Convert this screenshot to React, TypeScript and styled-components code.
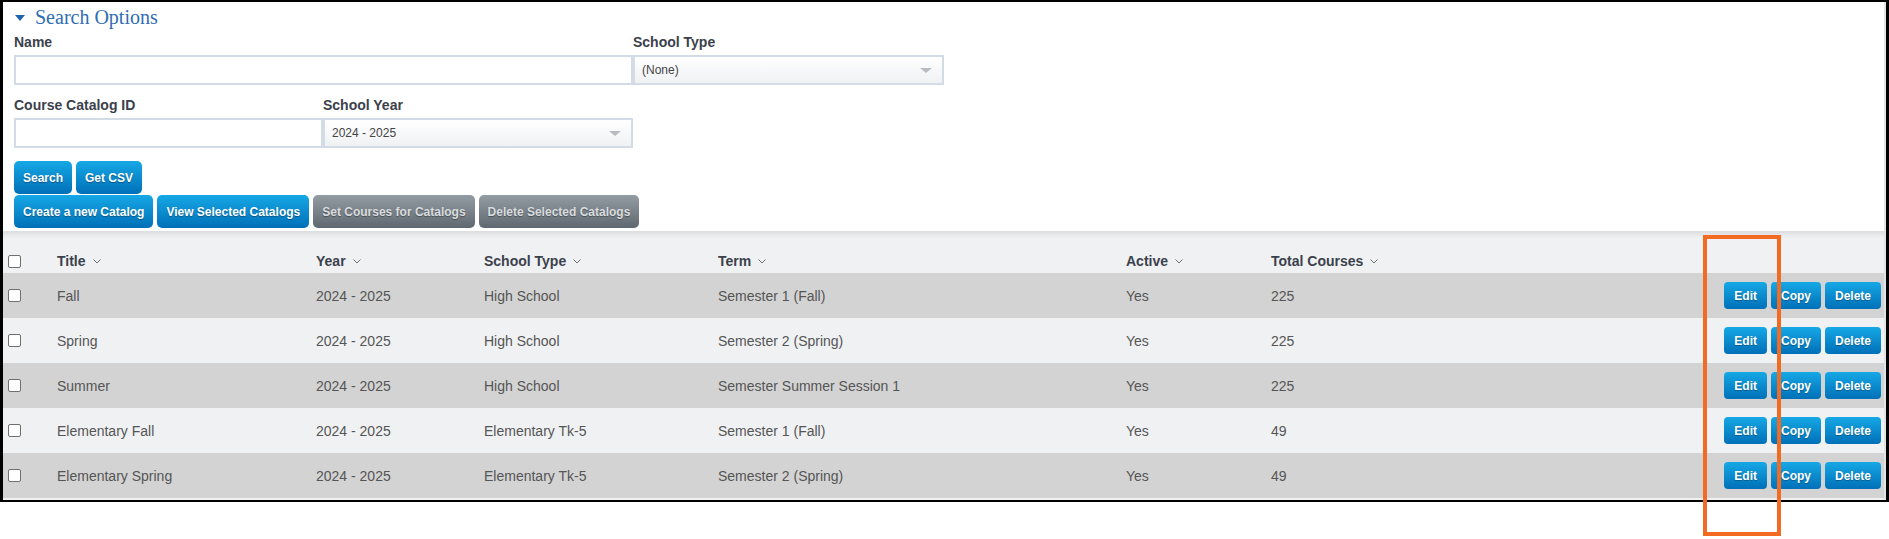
import React from "react";
import styled, { createGlobalStyle } from "styled-components";

interface Catalog {
	title: string;
	year: string;
	schoolType: string;
	term: string;
	active: string;
	total: number;
}

const catalogs: Catalog[] = [
	{ title: "Fall", year: "2024 - 2025", schoolType: "High School", term: "Semester 1 (Fall)", active: "Yes", total: 225 },
	{ title: "Spring", year: "2024 - 2025", schoolType: "High School", term: "Semester 2 (Spring)", active: "Yes", total: 225 },
	{ title: "Summer", year: "2024 - 2025", schoolType: "High School", term: "Semester Summer Session 1", active: "Yes", total: 225 },
	{ title: "Elementary Fall", year: "2024 - 2025", schoolType: "Elementary Tk-5", term: "Semester 1 (Fall)", active: "Yes", total: 49 },
	{ title: "Elementary Spring", year: "2024 - 2025", schoolType: "Elementary Tk-5", term: "Semester 2 (Spring)", active: "Yes", total: 49 },
];

const headers = ["Title", "Year", "School Type", "Term", "Active", "Total Courses"];

const Chevron = () => (
	<svg width="8" height="5" viewBox="0 0 8 5">
		<path d="M0.5 0.5 L4 4 L7.5 0.5" fill="none" stroke="#6b6f75" strokeWidth="1" />
	</svg>
);

const App: React.FC = () => {
	return (
		<Page>
			<GlobalStyle />
			<Frame>
				<Form>
					<Heading>
						<Caret />
						Search Options
					</Heading>
					<Fields>
						<Field span={2}>
							<Label>Name</Label>
							<TextBox />
						</Field>
						<Field span={1}>
							<Label>School Type</Label>
							<Select>
								(None)
								<Arrow />
							</Select>
						</Field>
						<Field span={1}>
							<Label>Course Catalog ID</Label>
							<TextBox />
						</Field>
						<Field span={1}>
							<Label>School Year</Label>
							<Select>
								2024 - 2025
								<Arrow />
							</Select>
						</Field>
					</Fields>
					<ButtonRow first>
						<Button>Search</Button>
						<Button>Get CSV</Button>
					</ButtonRow>
					<ButtonRow>
						<Button>Create a new Catalog</Button>
						<Button>View Selected Catalogs</Button>
						<Button disabled>Set Courses for Catalogs</Button>
						<Button disabled>Delete Selected Catalogs</Button>
					</ButtonRow>
				</Form>
				<Table>
					<HeaderRow>
						<CheckCell>
							<Check />
						</CheckCell>
						{headers.map((h) => (
							<HeadCell key={h}>
								{h}
								<Chevron />
							</HeadCell>
						))}
						<span />
					</HeaderRow>
					{catalogs.map((c, i) => (
						<Row key={c.title} odd={i % 2 === 0}>
							<CheckCell>
								<Check />
							</CheckCell>
							<Cell>{c.title}</Cell>
							<Cell>{c.year}</Cell>
							<Cell>{c.schoolType}</Cell>
							<Cell>{c.term}</Cell>
							<Cell>{c.active}</Cell>
							<Cell>{c.total}</Cell>
							<Actions>
								<SmallButton>Edit</SmallButton>
								<SmallButton>Copy</SmallButton>
								<SmallButton>Delete</SmallButton>
							</Actions>
						</Row>
					))}
				</Table>
			</Frame>
			<Highlight />
		</Page>
	);
};

export default App;

const GlobalStyle = createGlobalStyle`
	body {
		margin: 0;
		background: #fff;
		font-family: "Liberation Sans", Arial, sans-serif;
	}
`;

const Page = styled.div`
	position: relative;
	width: 1889px;
	height: 539px;
	box-sizing: border-box;
`;

const Frame = styled.div`
	width: 1889px;
	box-sizing: border-box;
	border-style: solid;
	border-color: #000;
	border-width: 2px 3px 2px 3px;
	background: #fff;
	display: flex;
	flex-direction: column;
	box-shadow: inset -2px 0 0 #e2e3e5;
`;

const Form = styled.div`
	padding: 3px 11px 3px 11px;
	display: flex;
	flex-direction: column;
`;

const Heading = styled.div`
	display: flex;
	align-items: center;
	height: 24px;
	font-family: "Liberation Serif", "Times New Roman", serif;
	font-size: 20px;
	color: #2f6db3;
`;

const Caret = styled.span`
	width: 0;
	height: 0;
	margin: 1px 10px 0 1px;
	border-left: 5px solid transparent;
	border-right: 5px solid transparent;
	border-top: 6px solid #1f62ad;
`;

const Fields = styled.div`
	display: grid;
	grid-template-columns: 309px 310px 311px;
	row-gap: 12px;
	margin-top: 5px;
`;

const Field = styled.div<{ span: number }>`
	grid-column: span ${(p) => p.span};
	display: flex;
	flex-direction: column;
`;

const Label = styled.div`
	font-size: 14px;
	line-height: 16px;
	font-weight: bold;
	color: #3b414c;
	margin-bottom: 5px;
`;

const TextBox = styled.div`
	height: 30px;
	box-sizing: border-box;
	border: 2px solid #d3dce6;
	background: #fff;
`;

const Select = styled.div`
	height: 30px;
	box-sizing: border-box;
	border: 2px solid #d3dce6;
	background: linear-gradient(#ffffff, #eff1f3);
	display: flex;
	align-items: center;
	justify-content: space-between;
	padding: 0 10px 0 7px;
	font-size: 12px;
	color: #444;
`;

const Arrow = styled.span`
	width: 0;
	height: 0;
	border-left: 6px solid transparent;
	border-right: 6px solid transparent;
	border-top: 5px solid #b8bcc1;
`;

const ButtonRow = styled.div<{ first?: boolean }>`
	display: flex;
	gap: 4px;
	margin-top: ${(p) => (p.first ? "13px" : "1px")};
`;

const Button = styled.div<{ disabled?: boolean }>`
	height: 33px;
	padding: 0 9px;
	box-sizing: border-box;
	display: flex;
	align-items: center;
	border-radius: 5px;
	font-size: 12px;
	font-weight: bold;
	color: ${(p) => (p.disabled ? "#d9dcdf" : "#fff")};
	text-shadow: 0 1px 1px rgba(0, 0, 0, 0.35);
	background: ${(p) =>
		p.disabled
			? "linear-gradient(#949ca3, #5f6870)"
			: "linear-gradient(#16a8e6, #0070b8)"};
`;

const Table = styled.div`
	background: #f0f1f3;
	box-shadow: inset 0 7px 6px -5px rgba(0, 0, 0, 0.12);
	padding-bottom: 2px;
	margin-right: 2px;
`;

const gridColumns = "54px 259px 168px 234px 408px 145px 1fr auto";

const HeaderRow = styled.div`
	display: grid;
	grid-template-columns: ${gridColumns};
	height: 42px;
	align-items: end;
	padding-bottom: 4px;
	box-sizing: border-box;
`;

const Row = styled.div<{ odd: boolean }>`
	display: grid;
	grid-template-columns: ${gridColumns};
	height: 45px;
	align-items: center;
	background: ${(p) => (p.odd ? "#d3d3d3" : "#f0f1f3")};
`;

const CheckCell = styled.div`
	padding-left: 5px;
	height: 16px;
	display: flex;
	align-items: center;
`;

const Check = styled.span`
	width: 13px;
	height: 13px;
	box-sizing: border-box;
	border: 1px solid #6f6f6f;
	border-radius: 2px;
	background: #fff;
`;

const HeadCell = styled.div`
	display: flex;
	align-items: center;
	gap: 7px;
	font-size: 14px;
	line-height: 16px;
	font-weight: bold;
	color: #3b414c;
`;

const Cell = styled.div`
	font-size: 14px;
	color: #555;
`;

const Actions = styled.div`
	display: flex;
	gap: 4px;
	padding-right: 3px;
`;

const SmallButton = styled.div`
	height: 27px;
	padding: 0 10px;
	box-sizing: border-box;
	display: flex;
	align-items: center;
	justify-content: center;
	border-radius: 4px;
	font-size: 12px;
	font-weight: bold;
	color: #fff;
	text-shadow: 0 1px 1px rgba(0, 0, 0, 0.3);
	background: linear-gradient(#16a8e6, #0070b8);
`;

const Highlight = styled.div`
	position: absolute;
	left: 1703px;
	top: 235px;
	width: 78px;
	height: 301px;
	box-sizing: border-box;
	border: 4px solid #f36a22;
`;
